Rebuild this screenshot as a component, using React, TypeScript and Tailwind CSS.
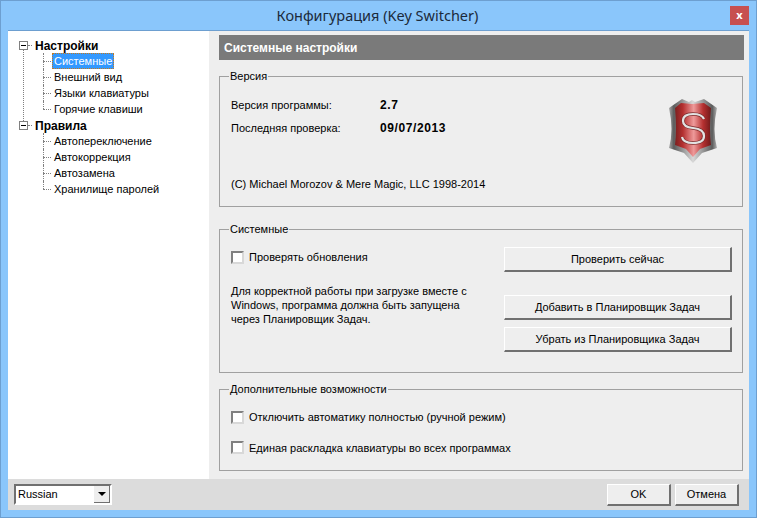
import React from "react";

const font = "font-['Liberation_Sans',Arial,sans-serif]";

function TreeItem({ label, active, last }: { label: string; active?: boolean; last?: boolean }) {
  return (
    <div className="relative flex h-4 items-center pl-[44px]">
      {/* dotted connectors */}
      <span className={`absolute left-[35px] top-0 w-0 border-l border-dotted border-[#808080] ${last ? "h-2" : "h-4"}`} />
      <span className="absolute left-[35px] top-2 w-2 border-t border-dotted border-[#808080]" />
      <span
        className={`flex h-4 items-center px-[1px] text-[11px] ${
          active ? "border border-dotted border-[#c47a1e] bg-[#3399ff] text-white" : "border border-transparent text-black"
        }`}
      >
        {label}
      </span>
    </div>
  );
}

function TreeRoot({ label, line, children }: { label: string; line?: boolean; children?: React.ReactNode }) {
  return (
    <div className="relative">
      {line && <span className="absolute left-[15px] top-[13px] h-[71px] w-0 border-l border-dotted border-[#808080]" />}
      <div className="relative flex h-4 items-center pl-[11px]">
        <span className="flex h-[9px] w-[9px] items-center justify-center border border-[#808080] bg-white">
          <span className="h-px w-[5px] bg-black" />
        </span>
        <span className="w-[4px] border-t border-dotted border-[#808080]" />
        <span className="ml-[3px] pt-[2px] text-[12px] font-bold text-black">{label}</span>
      </div>
      {children}
    </div>
  );
}

function Group({ title, className, children }: { title: string; className: string; children: React.ReactNode }) {
  return (
    <div className={`relative mr-px border border-[#a0a0a0] ${className}`}>
      <span className="absolute left-[9px] top-[-8px] bg-[#eeeeee] px-px text-[11px] leading-[14px] text-black">{title}</span>
      {children}
    </div>
  );
}

function WinButton({ label, className }: { label: string; className: string }) {
  return (
    <div
      className={`flex items-center justify-center border-t border-l border-t-white border-l-white border-b-2 border-r-2 border-b-[#707070] border-r-[#707070] bg-[#eeeeee] text-[11px] text-black ${className}`}
    >
      {label}
    </div>
  );
}

function Check({ label }: { label: string }) {
  return (
    <div className="flex items-center">
      <span className="h-[13px] w-[13px] border-2 border-t-[#808080] border-l-[#808080] border-b-[#d8d8d8] border-r-[#d8d8d8] bg-white" />
      <span className="ml-[5px] text-[11px] text-black">{label}</span>
    </div>
  );
}

function Shield() {
  const s = "M36 21 Q34 16 25 16 Q15 16 15 23 Q15 29 25 30 Q36 31 36 38 Q36 45 25 45 Q15 45 14 39";
  return (
    <svg width="50" height="66" viewBox="0 0 50 66">
      <defs>
        <linearGradient id="red" x1="0" x2="1" y1="0" y2="0">
          <stop offset="0" stopColor="#7c1f1f" />
          <stop offset="0.22" stopColor="#b53030" />
          <stop offset="0.52" stopColor="#ee9a9a" />
          <stop offset="0.78" stopColor="#b53030" />
          <stop offset="1" stopColor="#701a1a" />
        </linearGradient>
        <linearGradient id="rim" x1="0" x2="1" y1="0" y2="0">
          <stop offset="0" stopColor="#a8a8a8" />
          <stop offset="0.1" stopColor="#5c5c5c" />
          <stop offset="0.5" stopColor="#d8d8d8" />
          <stop offset="0.9" stopColor="#5c5c5c" />
          <stop offset="1" stopColor="#b0b0b0" />
        </linearGradient>
      </defs>
      <path d="M24 2 L27 4 L36 1 L49 10 Q44 32 49 50 L34 55 L25 65 L16 55 L1 50 Q6 32 1 10 L14 1 L21 4 Z" fill="url(#rim)" />
      <path d="M24 6 L36 5 L43 10 Q41 32 43 47 L32 51 L25 59 L18 51 L7 47 Q9 32 7 10 L13 5 Z" fill="url(#red)" />
      <path d={s} fill="none" stroke="#7a2a2a" strokeWidth="3.5" />
      <path d={s} fill="none" stroke="#e2e2e2" strokeWidth="2.2" />
    </svg>
  );
}

export default function App() {
  return (
    <div className={`flex h-[518px] w-[757px] flex-col border border-[#6d9fd0] bg-[#8ac6fb] ${font}`}>
      {/* Title bar */}
      <div className="relative flex h-[29px] shrink-0 items-center justify-center pr-[2px] font-['Noto_Sans',sans-serif] text-[14.5px] text-[#1b2a3a]">
        Конфигурация (Key Switcher)
        <div className="absolute right-[7px] top-[5px] flex h-[19px] w-[19px] items-center justify-center bg-[#c75050] text-[11px] font-bold text-white">
          x
        </div>
      </div>

      {/* Client area */}
      <div className="mx-[7px] mb-[7px] flex min-h-0 flex-1 flex-col border-t border-[#6d9fd0]">
        <div className="flex min-h-0 flex-1">
          {/* Tree */}
          <div className="w-[201px] shrink-0 bg-white pt-[6px]">
            <TreeRoot label="Настройки" line>
              <TreeItem label="Системные" active />
              <TreeItem label="Внешний вид" />
              <TreeItem label="Языки клавиатуры" />
              <TreeItem label="Горячие клавиши" last />
            </TreeRoot>
            <TreeRoot label="Правила">
              <TreeItem label="Автопереключение" />
              <TreeItem label="Автокоррекция" />
              <TreeItem label="Автозамена" />
              <TreeItem label="Хранилище паролей" last />
            </TreeRoot>
          </div>

          {/* Settings */}
          <div className="flex flex-1 flex-col bg-[#eeeeee] pl-[10px] pr-[5px] pt-[4px]">
            <div className="flex h-[25px] items-center bg-[#7a7a7a] pl-[5px] text-[12px] font-bold text-white">Системные настройки</div>

            <Group title="Версия" className="mt-[16px] h-[131px] pl-[11px] pr-[24px]">
              <div className="flex items-start justify-between">
                <div>
                  <div className="mt-[21px] flex text-[11px] leading-[14px]">
                    <span className="w-[149px]">Версия программы:</span>
                    <span className="text-[12px] font-bold tracking-[0.6px]">2.7</span>
                  </div>
                  <div className="mt-[9px] flex text-[11px] leading-[14px]">
                    <span className="w-[149px]">Последняя проверка:</span>
                    <span className="text-[12px] font-bold tracking-[0.6px]">09/07/2013</span>
                  </div>
                  <div className="mt-[42px] text-[11px] leading-[14px]">(C) Michael Morozov &amp; Mere Magic, LLC 1998-2014</div>
                </div>
                <div className="mt-[21px]">
                  <Shield />
                </div>
              </div>
            </Group>

            <Group title="Системные" className="mt-[22px] h-[144px] pl-[11px] pr-[10px]">
              <div className="flex justify-between">
                <div className="w-[250px]">
                  <div className="mt-[19px]">
                    <Check label="Проверять обновления" />
                  </div>
                  <p className="mt-[18px] text-[11px] leading-[14px]">
                    Для корректной работы при загрузке вместе с Windows, программа должна быть запущена через Планировщик Задач.
                  </p>
                </div>
                <div className="mt-[17px] flex w-[228px] flex-col">
                  <WinButton label="Проверить сейчас" className="h-[25px]" />
                  <WinButton label="Добавить в Планировщик Задач" className="mt-[23px] h-[25px]" />
                  <WinButton label="Убрать из Планировщика Задач" className="mt-[7px] h-[25px]" />
                </div>
              </div>
            </Group>

            <Group title="Дополнительные возможности" className="mt-[16px] h-[82px] pl-[11px]">
              <div className="mt-[19px]">
                <Check label="Отключить автоматику полностью (ручной режим)" />
              </div>
              <div className="mt-[14px]">
                <Check label="Единая раскладка клавиатуры во всех программах" />
              </div>
            </Group>
          </div>
        </div>

        {/* Bottom bar */}
        <div className="flex h-[31px] shrink-0 items-center justify-between bg-[#dcdcdc] pl-[6px] pr-[10px]">
          <div className="flex h-[21px] w-[98px] items-center justify-between border-2 border-t-[#707070] border-l-[#707070] border-b-white border-r-white bg-white pl-[2px] text-[11px]">
            Russian
            <span className="flex h-[17px] w-[16px] items-center justify-center border-b border-r border-[#707070] bg-[#eeeeee]">
              <span className="h-0 w-0 border-x-[4px] border-t-[4px] border-x-transparent border-t-black" />
            </span>
          </div>
          <div className="flex gap-[4px]">
            <WinButton label="OK" className="h-[22px] w-[64px]" />
            <WinButton label="Отмена" className="h-[22px] w-[64px]" />
          </div>
        </div>
      </div>
    </div>
  );
}
